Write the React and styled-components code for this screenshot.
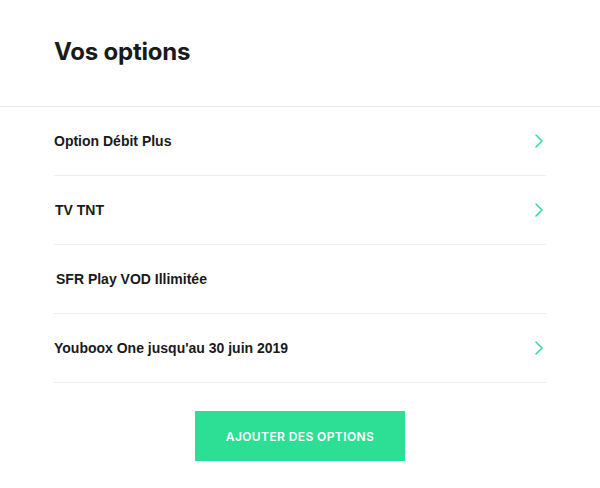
import React from "react";
import styled, { createGlobalStyle } from "styled-components";

const Global = createGlobalStyle`
  html, body { margin: 0; padding: 0; background: #fff; }
  body { font-family: "Liberation Sans", Arial, sans-serif; }
`;

const Page = styled.div`
  width: 600px;
  height: 488px;
  background: #fff;
  overflow: hidden;
`;

const Header = styled.header`
  height: 107px;
  box-sizing: border-box;
  padding: 37px 54px 0;
  border-bottom: 1px solid #ebebeb;
`;

const Title = styled.h1`
  margin: 0;
  font-family: Inter, "Open Sans", sans-serif;
  font-weight: 700;
  font-size: 24px;
  line-height: 30px;
  color: #1a1a1a;
  letter-spacing: -0.2px;
`;

const List = styled.ul`
  list-style: none;
  margin: 0 54px;
  padding: 0;
`;

const Row = styled.li`
  height: 68px;
  display: flex;
  align-items: center;
  justify-content: space-between;
  border-bottom: 1.5px solid #eeeeee;
  padding-left: ${(p) => p.$indent || 0}px;
  padding-right: 3px;
`;

const Label = styled.span`
  font-family: "Liberation Sans", Arial, sans-serif;
  font-weight: 700;
  font-size: 14px;
  color: #1a1a1a;
`;

const Footer = styled.div`
  display: flex;
  justify-content: center;
  padding-top: 28px;
`;

const Button = styled.button`
  width: 210px;
  height: 50px;
  border: none;
  background: #2ddf95;
  color: #fff;
  font-family: Inter, "Open Sans", sans-serif;
  font-weight: 600;
  font-size: 12px;
  letter-spacing: 0.4px;
  text-transform: uppercase;
  cursor: pointer;
`;

const Chevron = () => (
  <svg width="8" height="14" viewBox="0 0 8 14" fill="none">
    <path d="M1 1l6 6-6 6" stroke="#2ddf95" strokeWidth="1.5" strokeLinecap="round" strokeLinejoin="round" />
  </svg>
);

const items = [
  { label: "Option Débit Plus", arrow: true, indent: 0 },
  { label: "TV TNT", arrow: true, indent: 1 },
  { label: "SFR Play VOD Illimitée", arrow: false, indent: 2 },
  { label: "Youboox One jusqu'au 30 juin 2019", arrow: true, indent: 0 },
];

export default function App() {
  return (
    <Page>
      <Global />
      <Header>
        <Title>Vos options</Title>
      </Header>
      <List>
        {items.map((it) => (
          <Row key={it.label} $indent={it.indent}>
            <Label>{it.label}</Label>
            {it.arrow && <Chevron />}
          </Row>
        ))}
      </List>
      <Footer>
        <Button>Ajouter des options</Button>
      </Footer>
    </Page>
  );
}
